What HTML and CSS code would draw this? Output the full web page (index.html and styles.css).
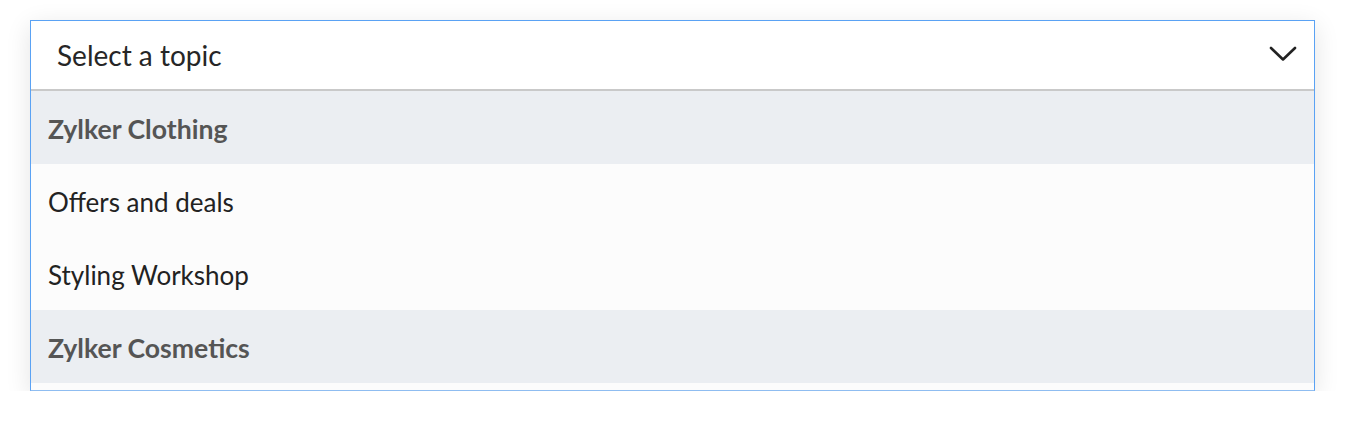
FILE: index.html
```html
<!DOCTYPE html>
<html>
<head>
<meta charset="utf-8">
<link rel="stylesheet" href="styles.css">
</head>
<body>
<div class="select">
  <div class="select-head">
    <span class="placeholder">Select a topic</span>
    <svg class="chevron" width="28" height="16" viewBox="0 0 28 16"><path d="M2 2 L14 13.5 L26 2" fill="none" stroke="#222" stroke-width="2.6" stroke-linecap="round" stroke-linejoin="round"/></svg>
  </div>
  <ul class="options">
    <li class="group">Zylker Clothing</li>
    <li class="option">Offers and deals</li>
    <li class="option">Styling Workshop</li>
    <li class="group">Zylker Cosmetics</li>
  </ul>
</div>
</body>
</html>
```
FILE: styles.css
```css
html, body { margin: 0; padding: 0; background: #fff; }
body {
  padding: 20px 31px 0 30px;
  font-family: Lato, "Open Sans", sans-serif;
}
.select {
  border: 1px solid #5aa2f4;
  border-bottom-color: #8fbdf1;
  background: #fff;
  box-shadow: 0 6px 24px rgba(0,0,0,0.11);
}
.select-head {
  height: 68px;
  display: flex;
  align-items: center;
  justify-content: space-between;
  padding: 0 17px 0 26px;
  border-bottom: 2px solid #c9c9c9;
}
.placeholder {
  font-size: 28px;
  color: #262626;
}
.chevron { display: block; margin-top: -2px; }
.options {
  list-style: none;
  margin: 0;
  padding: 0 0 7px 0;
  background: #fcfcfc;
}
.options li {
  height: 73px;
  display: flex;
  align-items: center;
  padding: 3px 17px 0 17px;
  box-sizing: border-box;
  font-size: 26px;
}
.options li.group {
  background: #ebeef2;
  color: #555;
  font-weight: 700;
  font-size: 26.6px;
}
.option {
  background: #fcfcfc;
  color: #222;
}
```
